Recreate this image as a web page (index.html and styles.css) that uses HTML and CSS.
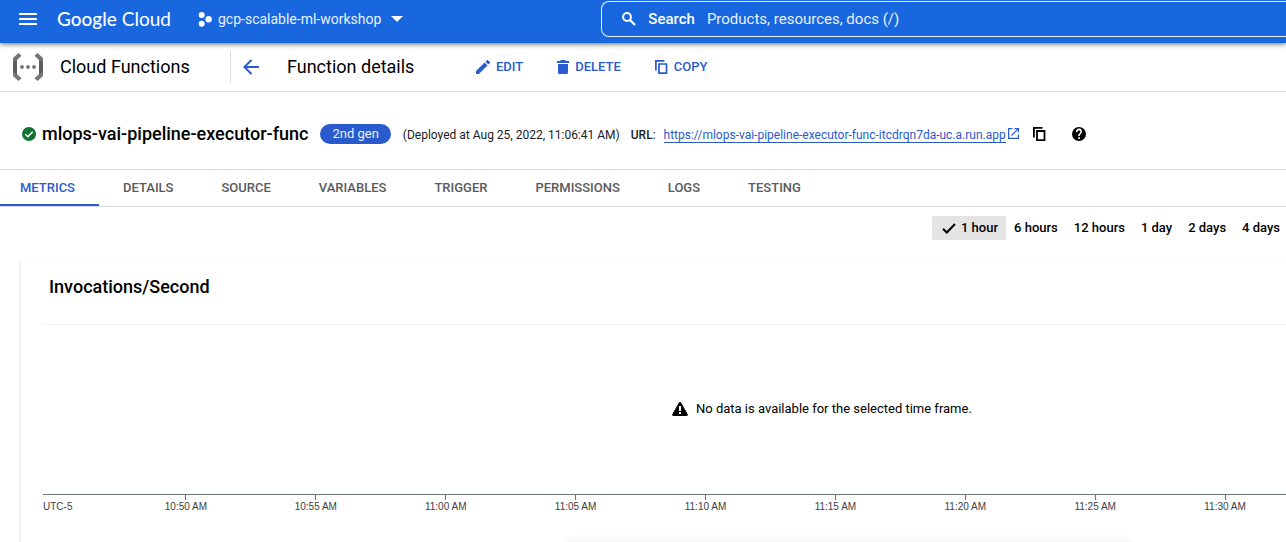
FILE: index.html
```html
<!DOCTYPE html>
<html lang="en">
<head>
<meta charset="utf-8">
<meta name="viewport" content="width=device-width, initial-scale=1">
<title>Function details – Cloud Functions</title>
<link rel="stylesheet" href="styles.css">
</head>
<body>
<header class="topbar">
  <button class="menu-button" aria-label="Main menu">
    <svg width="18" height="12" viewBox="0 0 18 12"><path fill="currentColor" d="M0 0h18v2H0zM0 5h18v2H0zM0 10h18v2H0z"/></svg>
  </button>
  <a class="brand" href="#"><span class="brand-strong">Google</span> Cloud</a>
  <button class="project">
    <svg width="14" height="15" viewBox="0 0 14 15"><g fill="currentColor"><circle cx="3.7" cy="3" r="3"/><circle cx="10.6" cy="7.2" r="3.2"/><circle cx="3.7" cy="11.7" r="3"/></g></svg>
    <span>gcp-scalable-ml-workshop</span>
    <svg class="caret" width="12" height="6" viewBox="0 0 12 6"><path fill="currentColor" d="M0 0h12L6 6z"/></svg>
  </button>
  <div class="search">
    <svg width="14" height="14" viewBox="0 0 14 14"><circle cx="5" cy="5" r="3.9" fill="none" stroke="currentColor" stroke-width="2"/><path d="M8 8l5 5" stroke="currentColor" stroke-width="2.2"/></svg>
    <label class="search-label" for="search">Search</label>
    <input class="search-input" id="search" type="text" placeholder="Products, resources, docs (/)">
  </div>
</header>

<div class="toolbar">
  <div class="product">
    <svg width="30" height="28" viewBox="0 0 30 28"><path fill="#757575" d="M5.500 0L0 5v18l5.500 5L8.500 25.200 4 21V7l4.500-4.200zM24.500 0L30 5v18l-5.500 5-3-2.800L26 21V7l-4.500-4.200z"/><path fill="#5c5c5c" d="M0 9l4-2v14l-4-2zM30 9l-4-2v14l4-2z"/><g fill="#757575"><circle cx="9" cy="14" r="1.900"/><circle cx="15" cy="14" r="1.900"/><circle cx="21" cy="14" r="1.900"/></g></svg>
    <span>Cloud Functions</span>
  </div>
  <button class="back" aria-label="Back">
    <svg width="16" height="16" viewBox="0 0 16 16"><path d="M16 8H2M8.500 1L1.400 8l7.100 7" fill="none" stroke="currentColor" stroke-width="2"/></svg>
  </button>
  <h1 class="page-title">Function details</h1>
  <div class="actions">
    <button class="action">
      <svg width="14" height="14" viewBox="3 3 18 18"><path fill="currentColor" d="M3 17.250V21h3.750L17.810 9.940l-3.750-3.750zM20.710 7.040a1 1 0 0 0 0-1.410l-2.340-2.340a1 1 0 0 0-1.410 0l-1.830 1.830 3.750 3.750z"/></svg>EDIT</button>
    <button class="action">
      <svg width="12" height="14" viewBox="0 0 12 14"><path fill="currentColor" d="M0 1h3l1-1h4l1 1h3v2H0zM1 4h10v8.500q0 1.500-1.500 1.500h-7Q1 14 1 12.500z"/></svg>DELETE</button>
    <button class="action">
      <svg width="13" height="14" viewBox="0 0 13 14"><path fill="none" stroke="currentColor" stroke-width="1.700" d="M.9 10.500V.9H9.500M4 4h7.500v9.100H4z"/></svg>COPY</button>
  </div>
</div>

<main>
  <section class="summary">
    <svg width="14" height="14" viewBox="0 0 14 14"><circle cx="7" cy="7" r="7" fill="#137333"/><path d="M3.300 7.200l2.500 2.500 4.900-5" fill="none" stroke="#fff" stroke-width="1.500"/></svg>
    <h2 class="name">mlops-vai-pipeline-executor-func</h2>
    <span class="badge">2nd gen</span>
    <div class="meta">
      <span class="deployed">(Deployed at Aug 25, 2022, 11:06:41 AM)</span>
      <span><span class="url-label">URL</span>:</span>
      <a class="url" href="#"><span class="url-text">https://mlops-vai-pipeline-executor-func-itcdrqn7da-uc.a.run.app</span>
        <svg width="11" height="11" viewBox="0 0 11 11"><path d="M4.500.6H.6v9.800h9.800V6.500M6.500.6h3.900v3.900M10.200.8L3.500 7.500" fill="none" stroke="currentColor" stroke-width="1.200"/></svg></a>
    </div>
    <button class="icon-button copy-url" aria-label="Copy URL">
      <svg width="13" height="14" viewBox="0 0 13 14"><path fill="none" stroke="currentColor" stroke-width="1.800" d="M.9 10.500V.9H9.500M4 4h7.500v9.100H4z"/></svg>
    </button>
    <button class="icon-button" aria-label="Help">
      <svg width="14" height="14" viewBox="2 2 20 20"><path fill="currentColor" d="M12 2a10 10 0 1 0 0 20 10 10 0 0 0 0-20zm1.200 17h-2.400v-2.400h2.400zm2-7.750l-.9.920c-.72.730-1.100 1.330-1.100 2.830h-2.400v-.5c0-1.100.45-2.100 1.170-2.830l1.240-1.260A2 2 0 1 0 10 9H7.700a4.300 4.300 0 1 1 7.500 2.250z"/></svg>
    </button>
  </section>

  <nav class="tabs">
    <a class="tab tab-active" href="#">METRICS</a>
    <a class="tab" href="#">DETAILS</a>
    <a class="tab" href="#">SOURCE</a>
    <a class="tab" href="#">VARIABLES</a>
    <a class="tab" href="#">TRIGGER</a>
    <a class="tab" href="#">PERMISSIONS</a>
    <a class="tab" href="#">LOGS</a>
    <a class="tab" href="#">TESTING</a>
  </nav>

  <div class="ranges">
    <button class="range range-active"><svg width="14" height="11" viewBox="0 0 14 11"><path d="M1 5.800l3.800 3.700L13 1" fill="none" stroke="currentColor" stroke-width="2"/></svg>1 hour</button>
    <button class="range">6 hours</button>
    <button class="range">12 hours</button>
    <button class="range">1 day</button>
    <button class="range">2 days</button>
    <button class="range">4 days</button>
  </div>

  <section class="card">
    <h3 class="card-title">Invocations/Second</h3>
    <div class="plot">
      <svg width="16" height="14" viewBox="0 0 16 14"><path fill="currentColor" d="M8 0q.8 0 1.300.9l6.300 11q.8 2.100-1.200 2.100H1.600q-2 0-1.200-2.100l6.300-11Q7.200 0 8 0z"/><path fill="#fff" d="M7 4h2v5H7zM7 10h2v2H7z"/></svg>
      <span>No data is available for the selected time frame.</span>
    </div>
    <div class="axis">
      <span class="zone">UTC-5</span>
      <ol class="ticks">
        <li class="tick">10:50 AM</li>
        <li class="tick">10:55 AM</li>
        <li class="tick">11:00 AM</li>
        <li class="tick">11:05 AM</li>
        <li class="tick">11:10 AM</li>
        <li class="tick">11:15 AM</li>
        <li class="tick">11:20 AM</li>
        <li class="tick">11:25 AM</li>
        <li class="tick">11:30 AM</li>
      </ol>
    </div>
  </section>
</main>
<div class="drawer-shadow"></div>
</body>
</html>
```
FILE: styles.css
```css
* { box-sizing: border-box; }
body {
  margin: 0;
  min-height: 100vh;
  display: flex;
  flex-direction: column;
  overflow: hidden;
  background: #fff;
  color: #000;
  font: 13px/20px Roboto, sans-serif;
}
button {
  display: flex;
  align-items: center;
  padding: 0;
  border: 0;
  background: none;
  color: inherit;
  font: inherit;
  white-space: nowrap;
}
a { color: inherit; text-decoration: none; }
h1, h2, h3, ol { margin: 0; padding: 0; }
svg { flex: none; display: block; }

.topbar {
  position: relative;
  display: flex;
  align-items: center;
  height: 43px;
  padding: 0 0 5px 19px;
  background: #1967df;
  color: #fff;
  box-shadow: 0 1px 5px rgba(0, 0, 0, .6);
}
.brand {
  margin-left: 20px;
  width: 116px;
  font: 19px/24px Lato, sans-serif;
  white-space: nowrap;
}
.brand-strong { font-weight: 500; }
.project { margin-left: 25px; gap: 6px; font-size: 14px; color: #e8f0fe; }
.project svg { color: #fff; }
.project .caret { margin-left: 4px; }
.search {
  flex: 1;
  display: flex;
  align-items: center;
  height: 36px;
  margin-left: 198px;
  padding-left: 20px;
  border: 1px solid #e8f0fe;
  border-right: 0;
  border-radius: 8px 0 0 8px;
  font-size: 15px;
}
.search-label { margin: 0 12px; font-weight: 500; }
.search-input {
  flex: 1;
  min-width: 0;
  padding: 0;
  border: 0;
  outline: 0;
  background: none;
  color: #fff;
  font: inherit;
}
.search-input::placeholder { color: #e8f0fe; opacity: 1; }

.toolbar {
  display: flex;
  align-items: center;
  height: 49px;
  padding-left: 13px;
  border-bottom: 1px solid #dadce0;
}
.product {
  display: flex;
  align-items: center;
  gap: 17px;
  width: 218px;
  height: 32px;
  border-right: 1px solid #dadce0;
  font-size: 18px;
}
.back { margin-left: 12px; color: #2a5bcd; }
.page-title { margin-left: 28px; width: 127px; font-size: 18px; font-weight: 400; white-space: nowrap; }
.actions { display: flex; gap: 34px; margin-left: 62px; color: #2a5bcd; font-weight: 500; }
.action { gap: 6px; }

.summary {
  display: flex;
  align-items: center;
  height: 78px;
  padding: 7px 0 0 22px;
  border-bottom: 1px solid #dadce0;
  font-size: 12px;
  white-space: nowrap;
}
.name { margin-left: 6px; font-size: 18px; font-weight: 500; }
.badge {
  margin: 0 12px;
  padding: 0 12px;
  border-radius: 10px;
  background: #2a5bcd;
  color: #e8f0fe;
  font-size: 13px;
}
.meta { display: flex; padding-top: 2px; color: #202124; }
.deployed { margin-right: 11px; }
.url-label { font-weight: 500; }
.url { display: flex; align-items: flex-start; gap: 2px; margin-left: 8px; color: #2a5bcd; }
.url svg { margin-top: 3px; }
.url-text { height: 18px; border-bottom: 1px solid #2a5bcd; }
.icon-button { margin-left: 26px; }
.copy-url { margin-left: 14px; }

.tabs {
  display: flex;
  height: 37px;
  border-bottom: 1px solid #dadce0;
  color: #5a5a5a;
  font-weight: 500;
}
.tab { padding: 8px 24px; white-space: nowrap; }
.tab-active { padding-left: 20px; color: #2a5bcd; border-bottom: 2px solid #2a5bcd; }

.ranges {
  display: flex;
  justify-content: flex-end;
  margin: 9px -2px 0 0;
}
.range { height: 24px; padding: 0 8px; font-weight: 500; }
.range-active { gap: 5px; padding-left: 10px; background: #e4e4e4; border-radius: 2px; }

main { flex: 1; display: flex; flex-direction: column; }
.card {
  flex: 1;
  margin: 18px 0 0 21px;
  padding-left: 22px;
  border-radius: 4px 0 0 0;
  box-shadow: 0 1px 3px rgba(0, 0, 0, .2);
}
.card-title {
  padding: 17px 6px 25px;
  border-bottom: 1px solid #f0f0f0;
  font-size: 18px;
  line-height: 24px;
  font-weight: 500;
}
.plot {
  display: flex;
  align-items: center;
  gap: 8px;
  height: 169px;
  padding: 0 0 2px 629px;
}
.axis {
  display: flex;
  margin-right: -4px;
  border-top: 1px solid #70757a;
  color: #3c4043;
  font: 10px/14px "Liberation Sans", Arial, sans-serif;
}
.zone { width: 78px; padding-top: 5px; }
.ticks {
  flex: 1;
  display: grid;
  grid-template-columns: repeat(9, 1fr);
  list-style: none;
}
.tick { text-align: center; white-space: nowrap; }
.tick::before {
  content: "";
  display: block;
  width: 1px;
  height: 5px;
  margin: 0 auto;
  background: #70757a;
}
.drawer-shadow {
  position: fixed;
  left: 44%;
  right: 12%;
  top: 100%;
  height: 20px;
  box-shadow: 0 0 10px rgba(0, 0, 0, .08);
}
```
